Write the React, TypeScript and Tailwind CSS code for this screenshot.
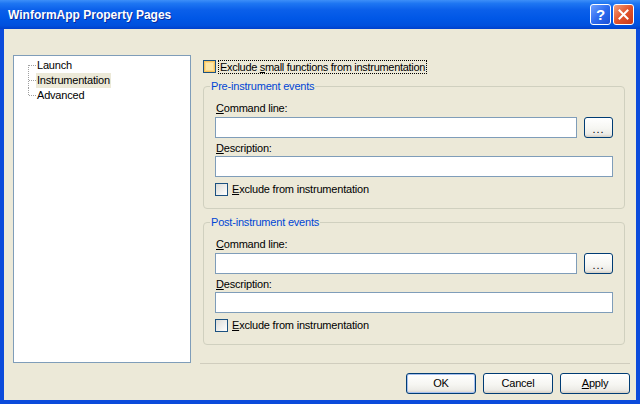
import React from "react";

const F = "font-[Liberation_Sans,Arial,sans-serif]";

function Check({ hover = false }: { hover?: boolean }) {
  return hover ? (
    <span className="block w-[13px] h-[13px] shrink-0 border border-[#1C5180] bg-[#FCE7A9] shadow-[inset_0_0_0_1px_#F9C45A,inset_0_0_0_2px_#FDD889]" />
  ) : (
    <span className="block w-[13px] h-[13px] shrink-0 border border-[#1C5180] bg-[linear-gradient(135deg,#DCDCD7,#FFFFFF)]" />
  );
}

function XPButton({
  children,
  def = false,
  w = "w-[70px]",
}: {
  children: React.ReactNode;
  def?: boolean;
  w?: string;
}) {
  return (
    <div
      className={`${w} h-[21px] shrink-0 rounded-[3px] border border-[#003C74] flex items-center justify-center text-[11px] leading-[13px] tracking-[-0.2px] text-black bg-[linear-gradient(#FFFFFF,#F6F6F2_55%,#ECEBE6_85%,#D6D0C5)] ${
        def ? "shadow-[inset_0_0_0_1px_#A7C0EE]" : ""
      }`}
    >
      {children}
    </div>
  );
}

function TextBox({ className = "" }: { className?: string }) {
  return <div className={`h-[21px] border border-[#7F9DB9] bg-white ${className}`} />;
}

function Group({ title }: { title: string }) {
  return (
    <fieldset className="border border-[#D0D0BF] rounded-[4px] p-0 m-0 min-w-0">
      <legend className="ml-[6px] px-[1px] text-[11px] leading-[13px] tracking-[-0.2px] text-[#0046D5]">
        {title}
      </legend>
      <div className="px-[11px] pt-[9px] pb-[12px] flex flex-col">
        <div className="h-[13px] text-[11px] leading-[13px] tracking-[-0.2px] pl-[1px]">
          <span className="underline">C</span>ommand line:
        </div>
        <div className="mt-[2px] flex items-center gap-[7px]">
          <TextBox className="flex-1" />
          <XPButton w="w-[29px]">
            <span className="tracking-[1px] mt-[3px]">...</span>
          </XPButton>
        </div>
        <div className="mt-[4px] h-[13px] text-[11px] leading-[13px] tracking-[-0.2px] pl-[1px]">
          <span className="underline">D</span>escription:
        </div>
        <TextBox className="mt-[1px]" />
        <div className="mt-[6px] h-[13px] flex items-center gap-[4px]">
          <Check />
          <span className="text-[11px] leading-[13px] tracking-[-0.2px]">
            <span className="underline">E</span>xclude from instrumentation
          </span>
        </div>
      </div>
    </fieldset>
  );
}

function TreeRow({
  label,
  pos,
  selected = false,
}: {
  label: string;
  pos: "first" | "mid" | "last";
  selected?: boolean;
}) {
  return (
    <div className="h-[15px] flex items-center">
      <svg width="22" height="15" className="shrink-0 block">
        <line x1="14.5" y1={pos === "first" ? 7 : 0} x2="14.5" y2={pos === "last" ? 8 : 15} stroke="#A0A0A0" strokeDasharray="1 1" />
        <line x1="15" y1="7.5" x2="22" y2="7.5" stroke="#A0A0A0" strokeDasharray="1 1" />
      </svg>
      <span
        className={`h-[15px] px-[1px] text-[11px] leading-[15px] tracking-[-0.2px] ${
          selected ? "bg-[#ECE9D8]" : ""
        }`}
      >
        {label}
      </span>
    </div>
  );
}

export default function App() {
  return (
    <div className={`w-[640px] h-[404px] flex flex-col bg-[#0B4BDB] ${F} text-black overflow-hidden`}>
      {/* Title bar */}
      <div className="h-[29px] shrink-0 flex items-center pl-[8px] pr-[6px] bg-[linear-gradient(#3D8FF8,#1E76F2_12%,#0A5FEA_35%,#0057E6_65%,#0050DD_88%,#0040CC)]">
        <div className="flex-1 text-white font-bold text-[12px] leading-[14px] [text-shadow:1px_1px_0_#0B2A9A]">
          WinformApp Property Pages
        </div>
        <div className="flex items-center gap-[2px]">
          <div className="w-[21px] h-[21px] rounded-[3px] border border-white bg-[linear-gradient(135deg,#6FA0FF,#2D6CF0_50%,#1A4FD6)] flex items-center justify-center text-white font-bold text-[15px] leading-none">
            ?
          </div>
          <div className="w-[21px] h-[21px] rounded-[3px] border border-white bg-[linear-gradient(135deg,#F2A07D,#E2532B_50%,#C8381A)] flex items-center justify-center">
            <svg width="11" height="11" viewBox="0 0 11 11">
              <path d="M1.5 1.5 L9.5 9.5 M9.5 1.5 L1.5 9.5" stroke="white" strokeWidth="2" strokeLinecap="square" />
            </svg>
          </div>
        </div>
      </div>

      {/* Body */}
      <div className="flex-1 mx-[4px] mb-[4px] bg-[#ECE9D8] flex pl-[9px] pt-[26px]">
        {/* Tree */}
        <div className="w-[178px] h-[308px] shrink-0 border border-[#7F9DB9] bg-white pt-[2px]">
          <TreeRow label="Launch" pos="first" />
          <TreeRow label="Instrumentation" pos="mid" selected />
          <TreeRow label="Advanced" pos="last" />
        </div>

        {/* Right column */}
        <div className="ml-[9px] w-[430px] flex flex-col">
          <div className="pl-[3px] pr-[5px] flex flex-col">
            <div className="mt-[5px] h-[13px] flex items-center gap-[2px]">
              <Check hover />
              <span className="border border-dotted border-black px-[1px] text-[11px] leading-[12px] tracking-[-0.3px]">
                Exclude <span className="underline">s</span>mall functions from instrumentation
              </span>
            </div>
            <div className="mt-[7px]">
              <Group title="Pre-instrument events" />
            </div>
            <div className="mt-[7px]">
              <Group title="Post-instrument events" />
            </div>
          </div>
          <div className="flex-1" />
          <div className="h-[1px] bg-[#D0CDBE]" />
          <div className="mt-[9px] mb-[6px] flex justify-end gap-[7px]">
            <XPButton def>OK</XPButton>
            <XPButton>Cancel</XPButton>
            <XPButton>
              <span>
                <span className="underline">A</span>pply
              </span>
            </XPButton>
          </div>
        </div>
      </div>
    </div>
  );
}
